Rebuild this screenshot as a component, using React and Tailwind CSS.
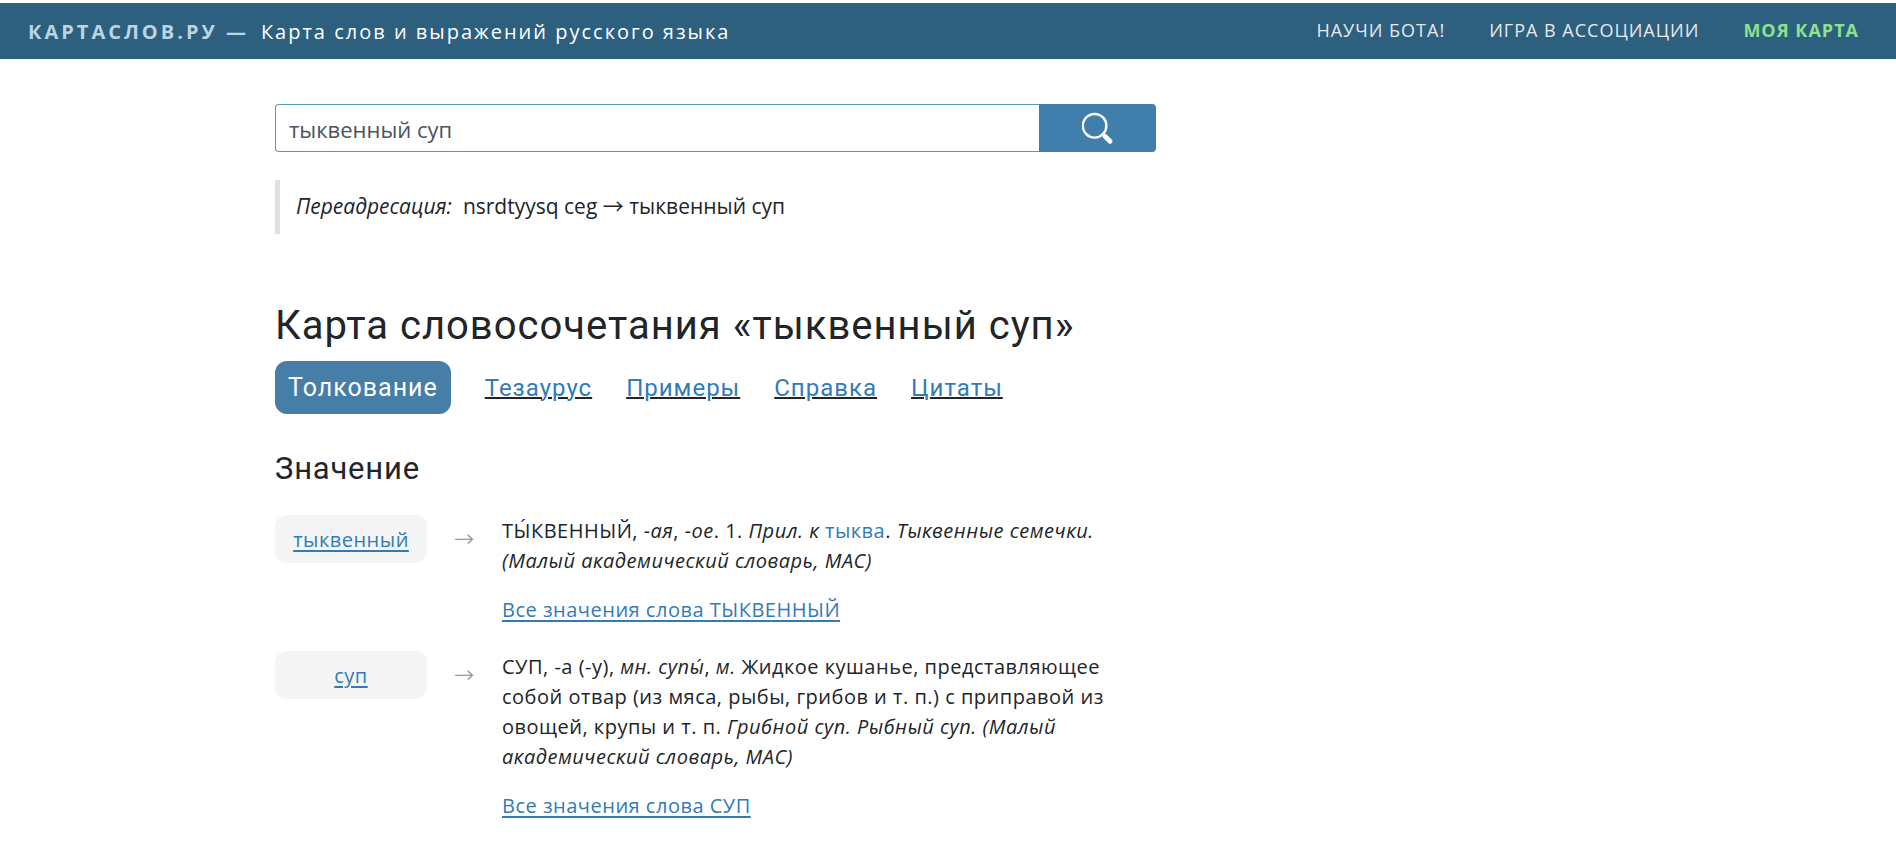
import React, { useState } from 'react';

const NAV_LINKS = [
  { label: 'НАУЧИ БОТА!', className: 'text-[#e9e9e9]' },
  { label: 'ИГРА В АССОЦИАЦИИ', className: 'text-[#e9e9e9]' },
  { label: 'МОЯ КАРТА', className: 'font-bold text-[#8fe08f]' },
];

const TABS = ['Тезаурус', 'Примеры', 'Справка', 'Цитаты'];

function Header() {
  return (
    <header className="flex items-center justify-between bg-[#2d5f7f] h-14 pl-7 pr-[37px]">
      <div className="flex items-center gap-3 pt-0.5 text-[20px] whitespace-nowrap">
        <a href="#" className="font-bold text-[#b9d6e2] tracking-[3px]">КАРТАСЛОВ.РУ —</a>
        <span className="text-white tracking-[2px]">Карта слов и выражений русского языка</span>
      </div>
      <nav className="flex gap-11 pb-0.5 text-[18px] tracking-[1px] whitespace-nowrap">
        {NAV_LINKS.map((link) => (
          <a key={link.label} href="#" className={link.className}>{link.label}</a>
        ))}
      </nav>
    </header>
  );
}

function SearchForm() {
  const [query, setQuery] = useState('тыквенный суп');

  return (
    <form onSubmit={(e) => e.preventDefault()} className="flex h-12">
      <input
        type="text"
        aria-label="Поиск"
        value={query}
        onChange={(e) => setQuery(e.target.value)}
        className="flex-1 min-w-0 h-12 border border-r-0 border-[#5797c3] rounded-l pl-[13px] pt-0.5 text-[22px] text-[#4b545c] outline-none"
      />
      <button type="submit" aria-label="Найти" className="w-[117px] bg-[#407fab] rounded-r flex items-center justify-center">
        <svg className="w-8 h-8" viewBox="0 0 32 32" fill="none" stroke="#fff" strokeLinecap="round">
          <circle cx="12.6" cy="13.8" r="11.8" strokeWidth="2.4" />
          <path d="M21.2 22.3l2 2" strokeWidth="3" />
          <path d="M23.2 24.5l4.8 4.8" strokeWidth="4.8" />
        </svg>
      </button>
    </form>
  );
}

function Meaning({ word, linkText, children }) {
  return (
    <div className="flex items-start">
      <a href="#" className="w-[152px] h-12 shrink-0 rounded-xl bg-[#f5f5f5] pt-px flex items-center justify-center text-[#337ab7] underline decoration-2 underline-offset-[3px]">
        {word}
      </a>
      <span className="w-[75px] h-12 shrink-0 flex items-center justify-center font-['Noto_Sans_CJK_SC',sans-serif] text-[20px] text-[#999]">→</span>
      <div className="flex-1 min-w-0 pt-px leading-[30px]">
        <p>{children}</p>
        <p className="mt-[19px]">
          <a href="#" className="text-[#337ab7] underline decoration-2 underline-offset-[3px]">{linkText}</a>
        </p>
      </div>
    </div>
  );
}

function App() {
  return (
    <div className="min-h-screen bg-white pt-[3px] font-['Open_Sans',sans-serif] text-[#212529]">
      <Header />

      <main className="ml-[275px] max-w-[881px] pt-[45px]">
        <SearchForm />

        <div className="mt-7 border-l-[5px] border-[#e0e0e0] pl-4 h-[54px] flex items-center gap-[11px] text-[21px]">
          <i>Переадресация:</i>
          <span>
            nsrdtyysq ceg <span className="font-['Noto_Sans_CJK_SC',sans-serif] leading-none">→</span> тыквенный суп
          </span>
        </div>

        <h1 className="mt-[66px] font-['Roboto',sans-serif] text-[40px] leading-[52px] tracking-[1px]">
          Карта словосочетания «тыквенный суп»
        </h1>

        <div className="mt-[9px] flex items-center font-['Roboto',sans-serif] text-[24px] tracking-[1px]">
          <span className="h-[53px] rounded-xl bg-[#467ea8] text-white text-[25px] px-[13px] flex items-center mr-[34px]">Толкование</span>
          <div className="flex gap-[34px]">
            {TABS.map((tab) => (
              <a key={tab} href="#" className="text-[#337ab7] underline decoration-[#212529] decoration-2">{tab}</a>
            ))}
          </div>
        </div>

        <h2 className="mt-[34px] mb-[25px] font-['Roboto',sans-serif] text-[31px] leading-[42px] tracking-wide">Значение</h2>

        <div className="flex flex-col gap-[26px] text-[20px] tracking-wide max-w-[840px]">
          <Meaning word="тыквенный" linkText="Все значения слова ТЫКВЕННЫЙ">
            ТЫ́КВЕННЫЙ, <i>-ая</i>, <i>-ое</i>. 1. <i>Прил. к</i> <a href="#" className="text-[#337ab7]">тыква</a>.{' '}
            <i>Тыквенные семечки. (Малый академический словарь, МАС)</i>
          </Meaning>
          <Meaning word="суп" linkText="Все значения слова СУП">
            СУП, -а (-у), <i>мн. супы́</i>, <i>м.</i> Жидкое кушанье, представляющее собой отвар (из мяса, рыбы, грибов и
            т. п.) с приправой из овощей, крупы и т. п. <i>Грибной суп. Рыбный суп. (Малый академический словарь, МАС)</i>
          </Meaning>
        </div>
      </main>
    </div>
  );
}

export default App;
